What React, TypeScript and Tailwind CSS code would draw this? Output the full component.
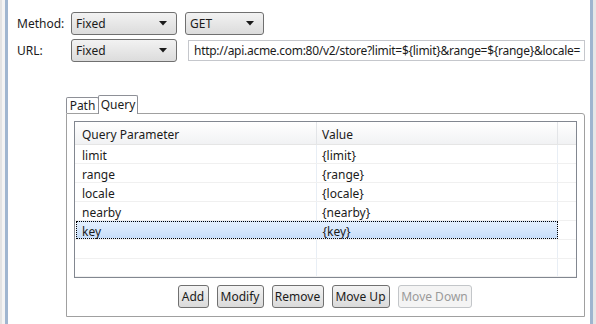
import React from 'react';

const rows = [
  { name: 'limit', value: '{limit}' },
  { name: 'range', value: '{range}' },
  { name: 'locale', value: '{locale}' },
  { name: 'nearby', value: '{nearby}' },
  { name: 'key', value: '{key}', selected: true },
  { name: '', value: '' },
  { name: '', value: '' },
];

function Combo({ label, width }: { label: string; width: string }) {
  return (
    <div
      className={`${width} h-[23px] flex items-center justify-between rounded-[3px] border border-[#707070] bg-gradient-to-b from-[#f2f2f2] to-[#dcdcdc] pl-[4px] pr-[9px]`}
    >
      <span className="pt-[1px]">{label}</span>
      <svg width="8" height="5" viewBox="0 0 8 5">
        <path d="M0 0 H8 L4 4.5 Z" fill="#1a1a1a" />
      </svg>
    </div>
  );
}

function Button({ label, width, disabled }: { label: string; width: string; disabled?: boolean }) {
  return (
    <div
      className={
        disabled
          ? `${width} h-[23px] flex items-center justify-center rounded-[3px] border border-[#c3c6c9] bg-[#f4f4f4] text-[#9a9a9a]`
          : `${width} h-[23px] flex items-center justify-center rounded-[3px] border border-[#707070] bg-gradient-to-b from-[#f3f3f3] to-[#dadada]`
      }
    >
      {label}
    </div>
  );
}

export default function App() {
  return (
    <div
      className="flex h-[324px] w-[596px] overflow-hidden bg-white text-[12px] text-[#1b1b1b]"
      style={{ fontFamily: '"Noto Sans", "Open Sans", sans-serif' }}
    >
      <div className="w-[2px] bg-[#e3e3e3]" />
      <div className="w-[3px] bg-[#f4f4f4]" />
      <div className="w-[3px] bg-[#a0b6d0]" />

      <div className="flex w-[582px] flex-col pl-[9px] pt-[12px]">
        <div className="flex items-center">
          <span className="w-[54px] pt-[1px]">Method:</span>
          <Combo label="Fixed" width="w-[106px]" />
          <div className="w-[8px]" />
          <Combo label="GET" width="w-[79px]" />
        </div>
        <div className="mt-[4px] flex items-center">
          <span className="w-[54px] pt-[1px]">URL:</span>
          <Combo label="Fixed" width="w-[106px]" />
          <div className="w-[11px]" />
          <div className="flex h-[21px] w-[397px] items-center overflow-hidden whitespace-nowrap border border-[#c5c7cc] pl-[5px] tracking-[-0.28px]">
            http://api.acme.com:80/v2/store?limit=${'{'}limit{'}'}&amp;range=${'{'}range{'}'}&amp;locale=
          </div>
        </div>

        <div className="ml-[49px] mt-[33px] flex w-[519px] flex-col">
          <div className="flex h-[18px] items-end">
            <div className="flex h-[16px] w-[33px] items-center justify-center rounded-t-[2px] border border-b-0 border-[#8e9097]">
              Path
            </div>
            <div className="relative -ml-[1px] top-[1px] flex h-[19px] w-[40px] items-center justify-center rounded-t-[2px] border border-b-0 border-[#8e9097] bg-white">
              Query
            </div>
          </div>
          <div className="flex h-[204px] flex-col rounded-tr-[3px] border border-[#a0a0a0] px-[7px] pt-[7px]">
            <div className="flex h-[157px] flex-col border border-[#828790]">
              <div className="flex h-[24px] border-b border-[#e5e5e5] bg-gradient-to-b from-white to-[#f1f2f4] leading-[16px]">
                <div className="w-[242px] border-r border-[#e3e5e8] pl-[7px] pt-[5px]">Query Parameter</div>
                <div className="w-[241px] border-r border-[#e3e5e8] pl-[5px] pt-[5px]">Value</div>
                <div className="flex-1" />
              </div>
              {rows.map((r, i) => (
                <div key={i} className="flex h-[19px] border-b border-[#f0f0f0] leading-[16px]">
                  {r.selected ? (
                    <div className="ml-[1px] flex w-[482px] border border-dotted border-black bg-gradient-to-b from-[#e3effd] to-[#c7defa]">
                      <div className="w-[241px] pl-[5px] pt-[2px]">{r.name}</div>
                      <div className="w-[240px] pl-[5px] pt-[2px]">{r.value}</div>
                    </div>
                  ) : (
                    <>
                      <div className="w-[242px] border-r border-[#e8eef5] pl-[7px] pt-[3px]">{r.name}</div>
                      <div className="w-[241px] border-r border-[#e8eef5] pl-[5px] pt-[3px]">{r.value}</div>
                    </>
                  )}
                  <div className="flex-1" />
                </div>
              ))}
            </div>
            <div className="mt-[7px] flex justify-center gap-[8px] pr-[2px]">
              <Button label="Add" width="w-[31px]" />
              <Button label="Modify" width="w-[47px]" />
              <Button label="Remove" width="w-[52px]" />
              <Button label="Move Up" width="w-[58px]" />
              <Button label="Move Down" width="w-[74px]" disabled />
            </div>
          </div>
        </div>
      </div>

      <div className="w-[1px] bg-white" />
      <div className="w-[3px] bg-[#9fb5cf]" />
      <div className="w-[3px] bg-[#e6e6e6]" />
    </div>
  );
}
